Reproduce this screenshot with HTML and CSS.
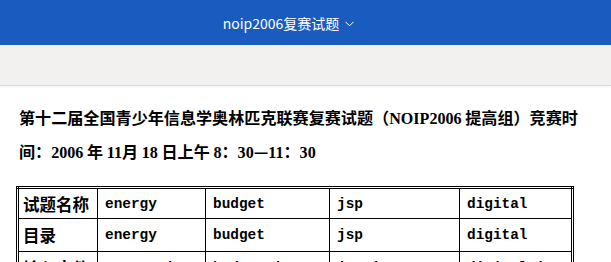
FILE: index.html
```html
<!DOCTYPE html>
<html>
	<head>
		<meta charset="UTF-8">
		<title>noip2006复赛试题</title>
		<link rel="stylesheet" href="styles.css">
	</head>
	<body>
		<div class="topbar">
			<span class="title">noip2006复赛试题</span>
			<svg class="arrow" width="9" height="6" viewBox="0 0 9 6"><path d="M0.5 0.8 L4.5 4.8 L8.5 0.8" fill="none" stroke="#fff" stroke-width="1"/></svg>
		</div>
		<div class="toolbar"></div>
		<div class="doc">
			<h1>第十二届全国青少年信息学奥林匹克联赛复赛试题（<span class="en">NOIP2006</span> 提高组）竞赛时间：<span class="en">2006</span> 年 <span class="en">11</span>月 <span class="en">18</span> 日上午 <span class="en">8</span>：<span class="en">30</span>—<span class="en">11</span>：<span class="en">30</span></h1>
			<table class="info">
				<tr class="r1">
					<td class="name">试题名称</td>
					<td>energy</td>
					<td>budget</td>
					<td>jsp</td>
					<td>digital</td>
				</tr>
				<tr class="r2">
					<td class="name">目录</td>
					<td>energy</td>
					<td>budget</td>
					<td>jsp</td>
					<td>digital</td>
				</tr>
				<tr class="r2">
					<td class="name">输入文件</td>
					<td>energy.in</td>
					<td>budget.in</td>
					<td>jsp.in</td>
					<td>digital.in</td>
				</tr>
				<tr class="r2">
					<td class="name">输出文件</td>
					<td>energy.out</td>
					<td>budget.out</td>
					<td>jsp.out</td>
					<td>digital.out</td>
				</tr>
			</table>
		</div>
	</body>
</html>
```

FILE: styles.css
```css
* {margin: 0;padding: 0;}
body {background: #fff;font-family: "Noto Sans CJK SC", sans-serif;}
.topbar {height: 45px;background: #1a5bbf;display: flex;align-items: center;justify-content: center;padding-right: 34px;color: #fff;}
.topbar .title {font-size: 14px;line-height: 20px;}
.topbar .arrow {margin-left: 6px;margin-top: 2px;}
.toolbar {height: 40px;background: #f2f1ef;border-bottom: 1px solid #d9d9d9;box-shadow: 0 1px 3px rgba(0,0,0,0.06);}
.doc {padding: 15px 16px 0 16px;}
.doc h1 {width: 568px;margin-left: 3px;font: bold 16.1px/32px "Noto Sans CJK SC", sans-serif;color: #000;}
.doc h1 .en {font-family: "Liberation Serif", serif;font-weight: bold;}
.info {width: 558px;margin-top: 17px;border-collapse: collapse;border: 3px double #000;}
.info td {border: 1px solid #000;padding: 0 7px;font: bold 14.4px "Liberation Mono", monospace;color: #000;text-align: left;}
.info td.name {width: 70px;padding: 0 4px;font: bold 16.5px "Noto Sans CJK SC", sans-serif;}
.info tr.r1 td {height: 29px;}
.info tr.r2 td {height: 32px;}
.info td:nth-child(2) {width: 93px;}
.info td:nth-child(3) {width: 109px;}
.info td:nth-child(4) {width: 115px;}
```
